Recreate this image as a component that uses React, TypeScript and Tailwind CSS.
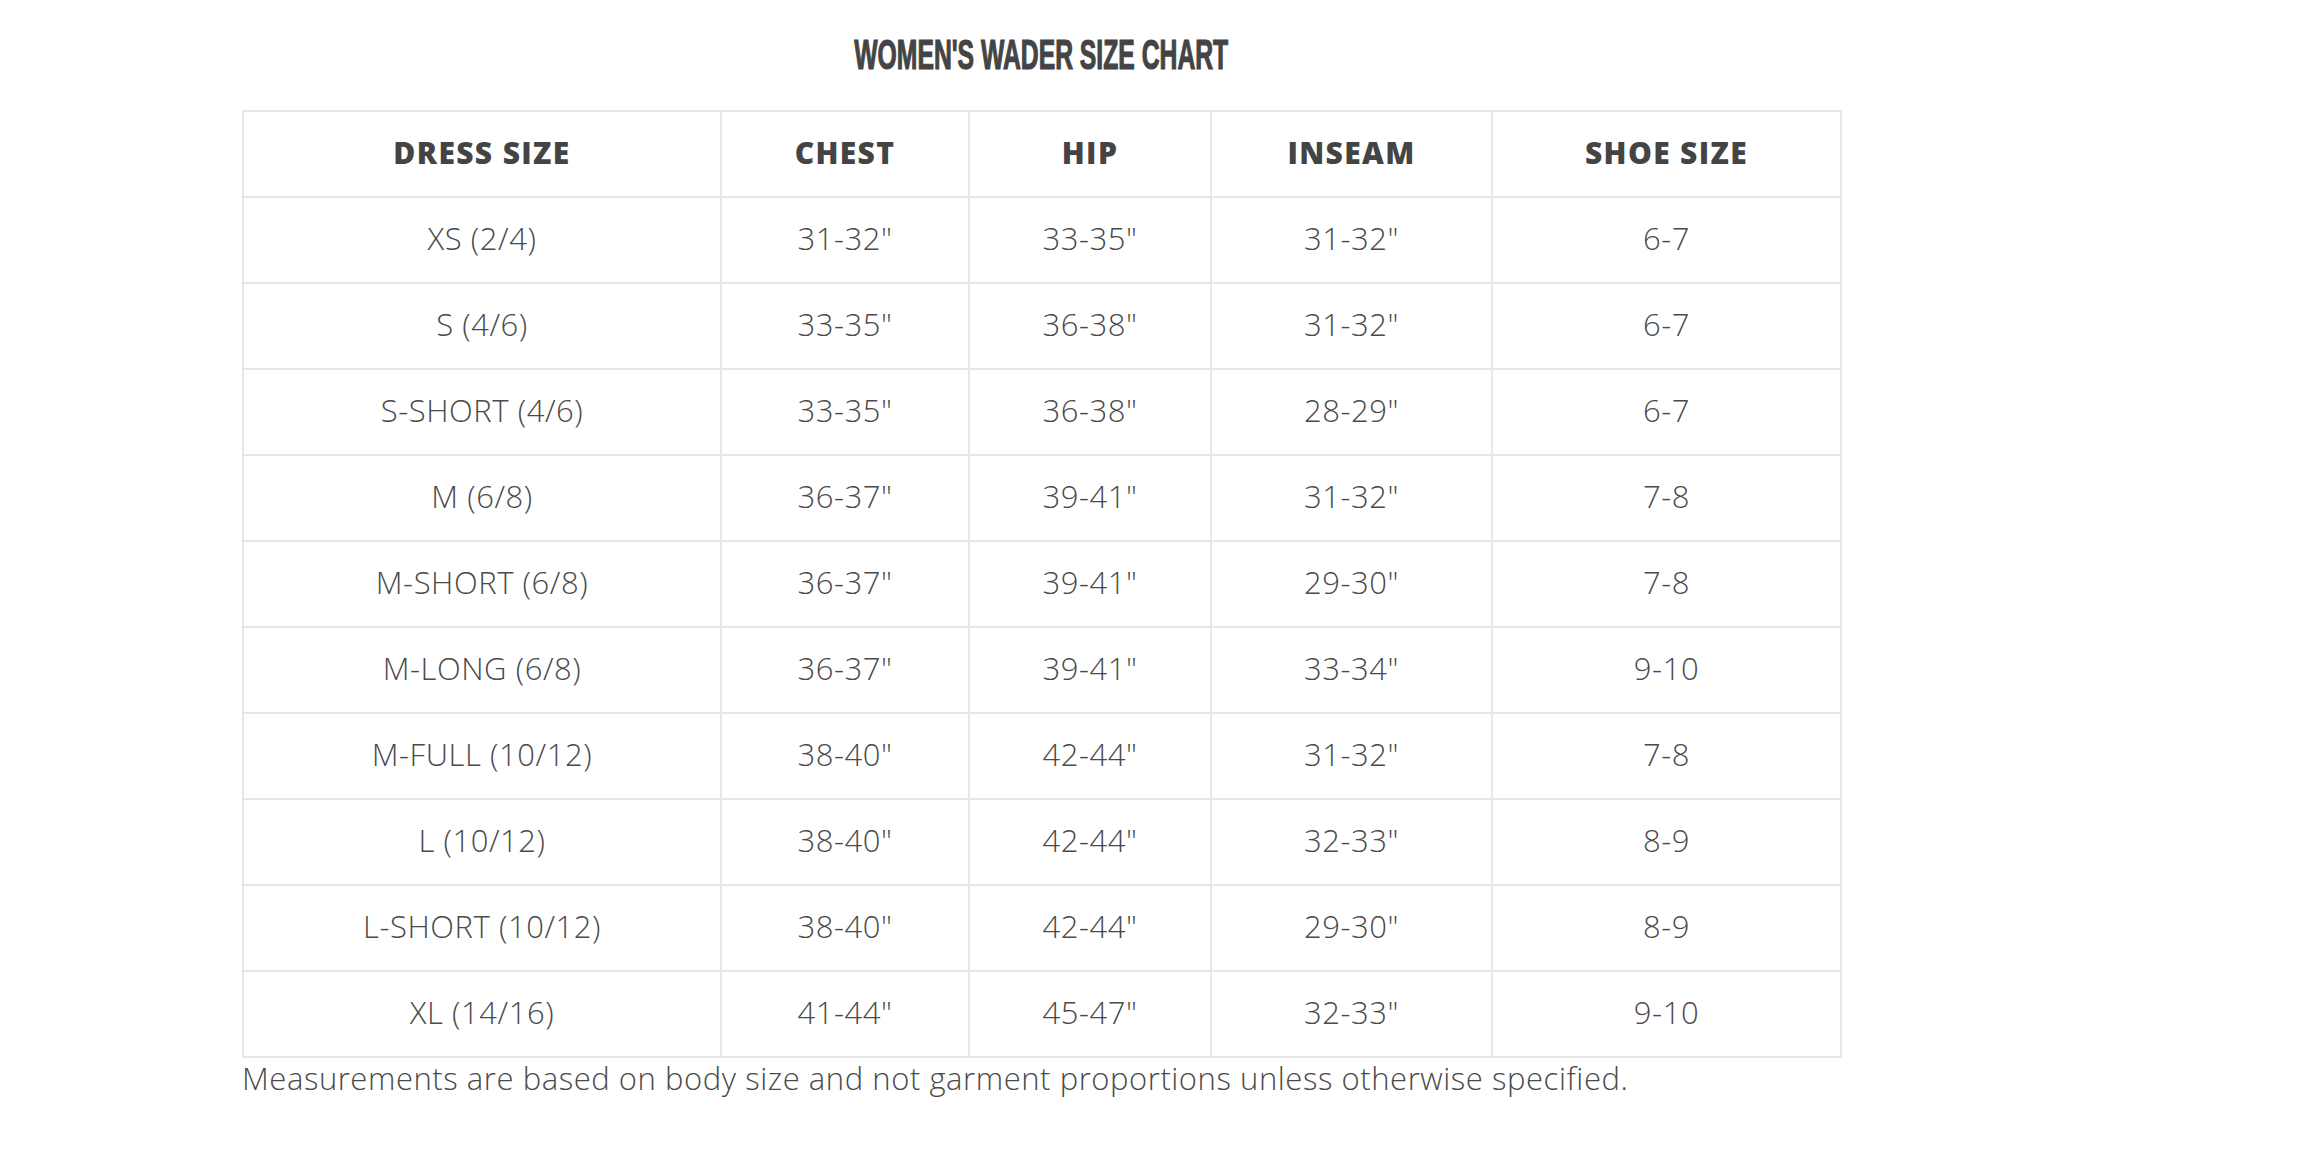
import React from "react";

const rows: string[][] = [
  ["XS (2/4)", '31-32"', '33-35"', '31-32"', "6-7"],
  ["S (4/6)", '33-35"', '36-38"', '31-32"', "6-7"],
  ["S-SHORT (4/6)", '33-35"', '36-38"', '28-29"', "6-7"],
  ["M (6/8)", '36-37"', '39-41"', '31-32"', "7-8"],
  ["M-SHORT (6/8)", '36-37"', '39-41"', '29-30"', "7-8"],
  ["M-LONG (6/8)", '36-37"', '39-41"', '33-34"', "9-10"],
  ["M-FULL (10/12)", '38-40"', '42-44"', '31-32"', "7-8"],
  ["L (10/12)", '38-40"', '42-44"', '32-33"', "8-9"],
  ["L-SHORT (10/12)", '38-40"', '42-44"', '29-30"', "8-9"],
  ["XL (14/16)", '41-44"', '45-47"', '32-33"', "9-10"],
];

const headers = ["DRESS SIZE", "CHEST", "HIP", "INSEAM", "SHOE SIZE"];

export default function App() {
  return (
    <div className="min-h-[1152px] w-[2314px] bg-white" style={{ fontFamily: "'Open Sans', Lato, sans-serif" }}>
      <div className="ml-[242px] w-[1598px] pt-[33px]">
        <div className="flex justify-center">
          <h1
            className="inline-block scale-x-[0.575] text-[43px] font-bold leading-none text-[#444444] [-webkit-text-stroke:1.2px_#444444]"
            style={{ fontFamily: "'Liberation Sans', Arial, sans-serif" }}
          >
            WOMEN'S WADER SIZE CHART
          </h1>
        </div>
        <table className="mt-[34px] w-[1598px] table-fixed border-collapse text-[#444444]">
          <colgroup>
            <col className="w-[478px]" />
            <col className="w-[248px]" />
            <col className="w-[242px]" />
            <col className="w-[281px]" />
            <col className="w-[349px]" />
          </colgroup>
          <thead>
            <tr>
              {headers.map((h) => (
                <th
                  key={h}
                  className="h-[86px] border-2 border-[#e6e6e6] p-0 pb-[3px] text-center align-middle text-[30px] font-extrabold tracking-[0.045em]"
                >
                  {h}
                </th>
              ))}
            </tr>
          </thead>
          <tbody>
            {rows.map((r, i) => (
              <tr key={i}>
                {r.map((c, j) => (
                  <td
                    key={j}
                    className="h-[86px] border-2 border-[#e6e6e6] p-0 pb-[3px] text-center align-middle text-[31px] font-light tracking-[0.018em] text-[#4a4a4a]"
                  >
                    {c}
                  </td>
                ))}
              </tr>
            ))}
          </tbody>
        </table>
        <p className="mt-0 whitespace-nowrap text-[31px] font-light leading-[40px] tracking-[0.018em] text-[#4a4a4a]">
          Measurements are based on body size and not garment proportions unless otherwise specified.
        </p>
      </div>
    </div>
  );
}
